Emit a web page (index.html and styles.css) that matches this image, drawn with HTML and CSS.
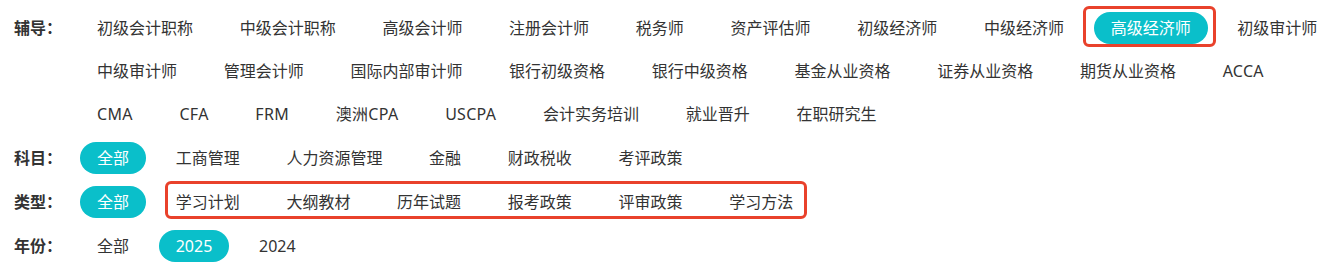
FILE: index.html
```html
<!DOCTYPE html>
<html lang="zh-CN">
<head>
    <meta charset="UTF-8">
    <meta name="viewport" content="width=device-width, initial-scale=1.0">
    <title>筛选</title>
    <link rel="stylesheet" href="styles.css">
</head>
<body>

    <div class="filter">
        <!-- 辅导 -->
        <div class="filter-row">
            <div class="filter-label">辅导：</div>
            <div class="filter-list">
                <a href="#" class="filter-item">初级会计职称</a>
                <a href="#" class="filter-item">中级会计职称</a>
                <a href="#" class="filter-item">高级会计师</a>
                <a href="#" class="filter-item">注册会计师</a>
                <a href="#" class="filter-item">税务师</a>
                <a href="#" class="filter-item">资产评估师</a>
                <a href="#" class="filter-item">初级经济师</a>
                <a href="#" class="filter-item">中级经济师</a>
                <a href="#" class="filter-item active marked">高级经济师</a>
                <a href="#" class="filter-item">初级审计师</a>
                <a href="#" class="filter-item">中级审计师</a>
                <a href="#" class="filter-item">管理会计师</a>
                <a href="#" class="filter-item">国际内部审计师</a>
                <a href="#" class="filter-item">银行初级资格</a>
                <a href="#" class="filter-item">银行中级资格</a>
                <a href="#" class="filter-item">基金从业资格</a>
                <a href="#" class="filter-item">证券从业资格</a>
                <a href="#" class="filter-item">期货从业资格</a>
                <a href="#" class="filter-item latin">ACCA</a>
                <a href="#" class="filter-item latin">CMA</a>
                <a href="#" class="filter-item latin">CFA</a>
                <a href="#" class="filter-item latin">FRM</a>
                <a href="#" class="filter-item latin">澳洲CPA</a>
                <a href="#" class="filter-item latin">USCPA</a>
                <a href="#" class="filter-item">会计实务培训</a>
                <a href="#" class="filter-item">就业晋升</a>
                <a href="#" class="filter-item">在职研究生</a>
            </div>
        </div>

        <!-- 科目 -->
        <div class="filter-row">
            <div class="filter-label">科目：</div>
            <div class="filter-list">
                <a href="#" class="filter-item active">全部</a>
                <a href="#" class="filter-item">工商管理</a>
                <a href="#" class="filter-item">人力资源管理</a>
                <a href="#" class="filter-item">金融</a>
                <a href="#" class="filter-item">财政税收</a>
                <a href="#" class="filter-item">考评政策</a>
            </div>
        </div>

        <!-- 类型 -->
        <div class="filter-row">
            <div class="filter-label">类型：</div>
            <div class="filter-list">
                <a href="#" class="filter-item active">全部</a>
                <div class="filter-group marked-group">
                    <a href="#" class="filter-item">学习计划</a>
                    <a href="#" class="filter-item">大纲教材</a>
                    <a href="#" class="filter-item">历年试题</a>
                    <a href="#" class="filter-item">报考政策</a>
                    <a href="#" class="filter-item">评审政策</a>
                    <a href="#" class="filter-item">学习方法</a>
                </div>
            </div>
        </div>

        <!-- 年份 -->
        <div class="filter-row">
            <div class="filter-label">年份：</div>
            <div class="filter-list">
                <a href="#" class="filter-item">全部</a>
                <a href="#" class="filter-item active">2025</a>
                <a href="#" class="filter-item">2024</a>
            </div>
        </div>
    </div>

</body>
</html>
```

FILE: styles.css
```css
html, body {
    margin: 0;
    padding: 0;
    background-color: #fff;
    overflow: hidden;
}

body {
    font-family: "Noto Sans", "Noto Sans CJK SC", sans-serif;
    font-size: 16px;
    color: #333;
}

/* Filter block */
.filter {
    width: 1360px;
    padding-top: 12px;
}

.filter-row {
    display: flex;
    margin-bottom: 1px;
}

.filter-label {
    width: 66px;
    padding-left: 14px;
    height: 32px;
    line-height: 32px;
    font-weight: bold;
    flex-shrink: 0;
}

.filter-list {
    flex: 1;
    display: flex;
    flex-wrap: wrap;
}

.filter-group {
    display: flex;
}

.filter-item {
    display: block;
    height: 32px;
    line-height: 32px;
    padding: 0 17px;
    margin: 0 12.7px 11px 0;
    border-radius: 16px;
    color: #333;
    text-decoration: none;
    white-space: nowrap;
}

.filter-item.latin {
    letter-spacing: 0.3px;
}

.filter-item.active {
    background-color: #0abfca;
    color: #fff;
}

/* Red annotation frames */
.marked,
.marked-group {
    position: relative;
}

.marked::after,
.marked-group::after {
    content: "";
    position: absolute;
    border: 3px solid #e9412b;
    border-radius: 6px;
}

.marked::after {
    left: -11px;
    right: -8px;
    top: -6px;
    bottom: -3px;
}

.marked-group::after {
    left: 6px;
    right: 16px;
    top: -5px;
    bottom: 10px;
}
```
